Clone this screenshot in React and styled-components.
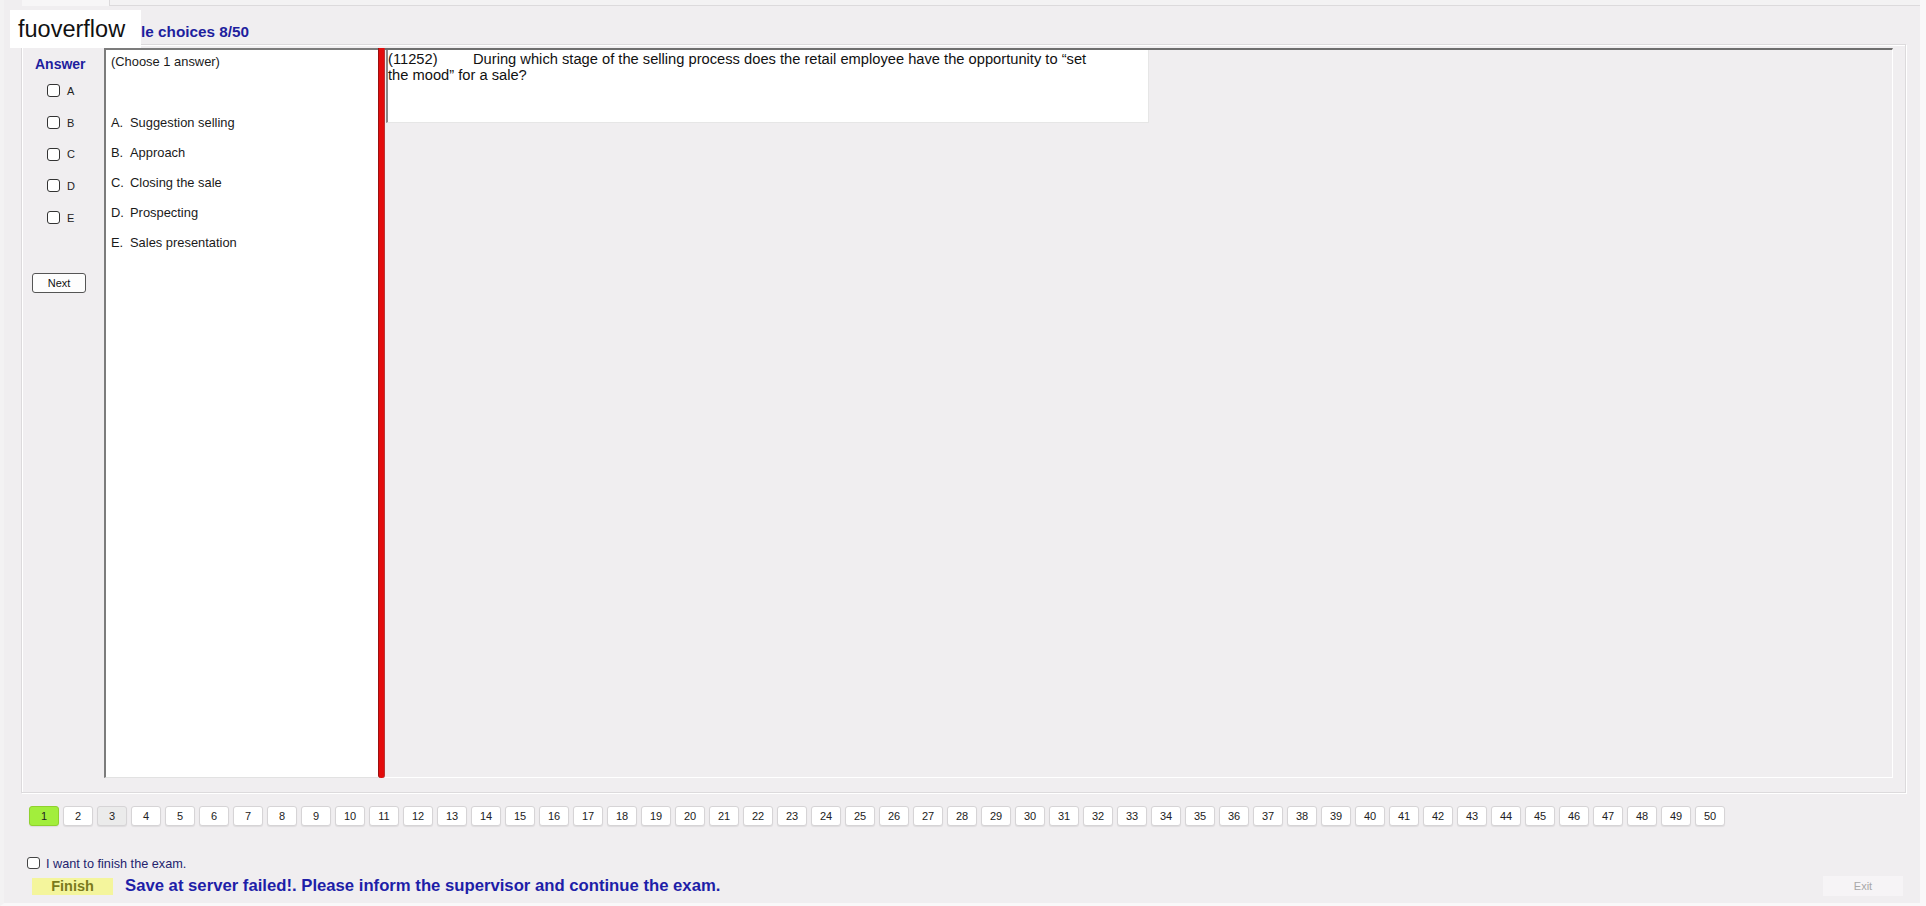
import React from 'react';
import styled, { createGlobalStyle } from 'styled-components';

const GlobalStyle = createGlobalStyle`
    html, body {
        margin: 0;
        padding: 0;
        background: #f0eef0;
        font-family: 'Liberation Sans', Arial, sans-serif;
    }
    * { box-sizing: border-box; }
`

const options = [
    { key: 'A', text: 'Suggestion selling' },
    { key: 'B', text: 'Approach' },
    { key: 'C', text: 'Closing the sale' },
    { key: 'D', text: 'Prospecting' },
    { key: 'E', text: 'Sales presentation' },
]

const pages = Array.from({ length: 50 }, (_, i) => i + 1)

const App = () => {
    return (
        <>
            <GlobalStyle />
            <Window>
                <Watermark>fuoverflow</Watermark>
                <TabStrip>
                    <Tab />
                    <TabLine />
                </TabStrip>
                <Heading>Multiple choices 8/50</Heading>
                <Group>
                    <AnswerCol>
                        <AnswerTitle>Answer</AnswerTitle>
                        <CheckList>
                            {options.map(o => (
                                <CheckRow key={o.key}>
                                    <Check type="checkbox" />
                                    <CheckLabel>{o.key}</CheckLabel>
                                </CheckRow>
                            ))}
                        </CheckList>
                        <NextButton>Next</NextButton>
                    </AnswerCol>
                    <OptionsBox>
                        <ChooseHint>(Choose 1 answer)</ChooseHint>
                        <OptionList>
                            {options.map(o => (
                                <OptionRow key={o.key}>
                                    <OptionLetter>{o.key}.</OptionLetter>
                                    {o.text}
                                </OptionRow>
                            ))}
                        </OptionList>
                    </OptionsBox>
                    <Splitter />
                    <RightPanel>
                        <QuestionBox>
                            <QuestionId>(11252)</QuestionId>During which stage of the selling process does the retail employee have the opportunity to “set<br />
                            the mood” for a sale?
                        </QuestionBox>
                    </RightPanel>
                </Group>
                <PageBar>
                    {pages.map(n => (
                        <PageButton key={n} $current={n === 1} $visited={n === 3}>{n}</PageButton>
                    ))}
                </PageBar>
                <FinishCheckRow>
                    <SmallCheck type="checkbox" />
                    <FinishCheckText>I want to finish the exam.</FinishCheckText>
                </FinishCheckRow>
                <Footer>
                    <FooterLeft>
                        <FinishButton>Finish</FinishButton>
                        <Message>Save at server failed!. Please inform the supervisor and continue the exam.</Message>
                    </FooterLeft>
                    <ExitButton disabled>Exit</ExitButton>
                </Footer>
            </Window>
        </>
    )
}

const Window = styled.div`
    position: relative;
    width: 1926px;
    height: 906px;
    display: flex;
    flex-direction: column;
    background: #f0eef0;
    border-left: 4px solid #f3f2f3;
    border-right: 6px solid #f9f8f9;
    border-bottom: 3px solid #f9f8f9;
    overflow: hidden;
`

// the watermark sits over the heading, as in the capture
const Watermark = styled.div`
    position: absolute;
    left: 6px;
    top: 10px;
    width: 131px;
    height: 38px;
    background: #fff;
    color: #111;
    font-family: 'Liberation Sans', Arial, sans-serif;
    font-size: 23.5px;
    line-height: 38px;
    padding-left: 8px;
    white-space: nowrap;
    z-index: 2;
`

const TabStrip = styled.div`
    height: 6px;
    display: flex;
`

const Tab = styled.div`
    margin-left: 18px;
    width: 88px;
    background: #f7f6f7;
    border-right: 1px solid #dcdadc;
`

const TabLine = styled.div`
    flex: 1;
    background: #f3f2f3;
    border-bottom: 1px solid #dcdadc;
`

const Heading = styled.div`
    height: 38px;
    padding: 18px 0 4px 92px;
    color: #1e1e9e;
    font-size: 15.3px;
    font-weight: bold;
    line-height: 16px;
    white-space: nowrap;
`

const Group = styled.div`
    margin-left: 17px;
    width: 1885px;
    height: 749px;
    display: flex;
    padding: 3px 12px 14px 0;
    border: 1px solid #dcdadc;
    box-shadow: inset 1px 1px 0 #fff, 1px 1px 0 #fff;
`

const AnswerCol = styled.div`
    width: 82px;
    flex-shrink: 0;
    display: flex;
    flex-direction: column;
    padding-top: 8px;
`

const AnswerTitle = styled.div`
    padding-left: 13px;
    color: #1e1e9e;
    font-size: 14px;
    font-weight: bold;
    line-height: 16px;
`

const CheckList = styled.div`
    margin-top: 3px;
    padding-left: 25px;
    display: flex;
    flex-direction: column;
`

const CheckRow = styled.label`
    height: 31.7px;
    display: flex;
    align-items: center;
    gap: 7px;
`

const Check = styled.input`
    appearance: none;
    margin: 0;
    width: 13px;
    height: 13px;
    border: 1px solid #333;
    border-radius: 3px;
    background: #fff;
`

const CheckLabel = styled.span`
    font-size: 11px;
    color: #222;
`

const NextButton = styled.button`
    margin: 40px 0 0 10px;
    width: 54px;
    height: 20px;
    padding: 0;
    border: 1px solid #555;
    border-radius: 3px;
    background: #fdfdfd;
    font-family: 'Liberation Sans', Arial, sans-serif;
    font-size: 11px;
    color: #111;
`

const OptionsBox = styled.div`
    width: 274px;
    flex-shrink: 0;
    background: #fff;
    border-left: 2px solid #7c7c7c;
    border-top: 2px solid #7c7c7c;
    border-bottom: 1px solid #e2e2e2;
    padding: 4px 0 0 5px;
    font-size: 12.9px;
    color: #1a1a1a;
`

const ChooseHint = styled.div`
    line-height: 16px;
`

const OptionList = styled.div`
    margin-top: 37px;
    display: flex;
    flex-direction: column;
`

const OptionRow = styled.div`
    height: 30px;
    display: flex;
    align-items: center;
`

const OptionLetter = styled.span`
    width: 19px;
    flex-shrink: 0;
`

const Splitter = styled.div`
    width: 7px;
    flex-shrink: 0;
    background: #e30c0c;
    border-left: 1px solid #9a1010;
    border-right: 1px solid #b33;
    border-radius: 0 0 3px 3px;
`

const RightPanel = styled.div`
    flex: 1;
    border-top: 2px solid #6e6e6e;
    border-right: 1px solid #fff;
    border-bottom: 1px solid #fff;
    padding-left: 1px;
`

const QuestionBox = styled.div`
    width: 763px;
    height: 73px;
    background: #fff;
    border-left: 2px solid #8a8a8a;
    border-right: 1px solid #e6e6e6;
    border-bottom: 1px solid #e6e6e6;
    padding: 1px 0 0 0;
    font-size: 14.7px;
    line-height: 16px;
    color: #111;
    white-space: nowrap;
`

const QuestionId = styled.span`
    display: inline-block;
    width: 85px;
`

const PageBar = styled.div`
    margin-top: 13px;
    padding-left: 25px;
    display: flex;
    gap: 4px;
`

const PageButton = styled.button`
    width: 30px;
    height: 20px;
    padding: 0;
    border: 1px solid ${p => (p.$current ? '#8fd12e' : '#d6d4d6')};
    border-radius: 3px;
    background: ${p => (p.$current ? '#a2ee3c' : p.$visited ? '#ebebeb' : '#fff')};
    box-shadow: 0 1px 1px rgba(0, 0, 0, 0.08);
    font-family: 'Liberation Sans', Arial, sans-serif;
    font-size: 11px;
    color: #222;
`

const FinishCheckRow = styled.label`
    margin: 31px 0 0 23px;
    height: 12px;
    display: flex;
    align-items: center;
    gap: 6px;
`

const SmallCheck = styled(Check)`
    width: 13px;
    height: 12px;
    border-color: #444;
`

const FinishCheckText = styled.span`
    font-size: 12.7px;
    color: #23236e;
    padding-top: 2px;
`

const Footer = styled.div`
    margin-top: 7px;
    height: 20px;
    padding: 0 17px 0 28px;
    display: flex;
    justify-content: space-between;
    align-items: center;
`

const FooterLeft = styled.div`
    display: flex;
    align-items: center;
    gap: 12px;
`

const FinishButton = styled.div`
    width: 81px;
    height: 17px;
    background: #f4f59c;
    color: #7a7a1c;
    font-size: 14.5px;
    font-weight: bold;
    line-height: 17px;
    text-align: center;
`

const Message = styled.div`
    color: #1e1ea8;
    font-size: 16.7px;
    font-weight: bold;
    white-space: nowrap;
`

const ExitButton = styled.button`
    width: 80px;
    height: 20px;
    padding: 0;
    border: none;
    background: #f6f4f6;
    color: #a8a8a8;
    font-family: 'Liberation Sans', Arial, sans-serif;
    font-size: 11px;
`

export default App
